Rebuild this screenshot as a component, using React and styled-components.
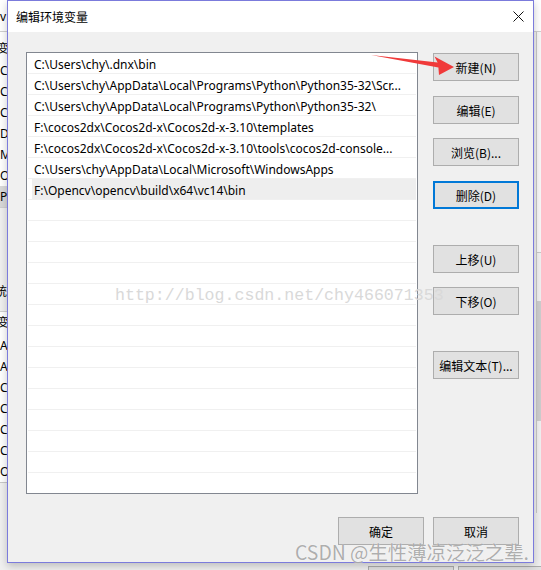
import React from "react";
import styled, { createGlobalStyle } from "styled-components";

const GlobalStyle = createGlobalStyle`
  html, body {
    margin: 0;
    padding: 0;
  }
  body {
    width: 541px;
    height: 570px;
    overflow: hidden;
    background: #f0f0f0;
    font-family: "Noto Sans CJK SC", sans-serif;
  }
`;

const paths = [
  "C:\\Users\\chy\\.dnx\\bin",
  "C:\\Users\\chy\\AppData\\Local\\Programs\\Python\\Python35-32\\Scr...",
  "C:\\Users\\chy\\AppData\\Local\\Programs\\Python\\Python35-32\\",
  "F:\\cocos2dx\\Cocos2d-x\\Cocos2d-x-3.10\\templates",
  "F:\\cocos2dx\\Cocos2d-x\\Cocos2d-x-3.10\\tools\\cocos2d-console...",
  "C:\\Users\\chy\\AppData\\Local\\Microsoft\\WindowsApps",
  "F:\\Opencv\\opencv\\build\\x64\\vc14\\bin",
];

// only a sliver of the window behind shows at the left edge
const userVars = ["CO", "CO", "CO", "DI", "M", "O", "Pa"];
const sysVars = ["Al", "Al", "Cl", "Cl", "Co", "CO", "O)"];

const buttons = [
  { label: "新建(N)", gap: 0 },
  { label: "编辑(E)", gap: 15 },
  { label: "浏览(B)...", gap: 14 },
  { label: "删除(D)", gap: 15, focused: true },
  { label: "上移(U)", gap: 36 },
  { label: "下移(O)", gap: 14 },
  { label: "编辑文本(T)...", gap: 36 },
];

const App = () => {
  const emptyRows = Array.from({ length: 15 });

  return (
    <Desktop>
      <GlobalStyle />
      <LeftPeek>
        <PeekTitle>v</PeekTitle>
        <PeekHeader>变</PeekHeader>
        {userVars.map((v, i) => (
          <PeekRow key={"u" + i} selected={i === userVars.length - 1}>
            {v}
          </PeekRow>
        ))}
        <PeekSection>统</PeekSection>
        <PeekHeader2>变</PeekHeader2>
        {sysVars.map((v, i) => (
          <PeekRow key={"s" + i}>{v}</PeekRow>
        ))}
        <PeekFooter />
      </LeftPeek>

      <Dialog>
        <TitleBar>
          <Title>编辑环境变量</Title>
          <svg width="11" height="11" viewBox="0 0 11 11">
            <path d="M0.5 0.5 L10.5 10.5 M10.5 0.5 L0.5 10.5" stroke="#111" strokeWidth="1" />
          </svg>
        </TitleBar>
        <Body>
          <Main>
            <List>
              {paths.map((p, i) => (
                <Row key={p} selected={i === paths.length - 1}>
                  {p}
                </Row>
              ))}
              {emptyRows.map((_, i) => (
                <Row key={"e" + i} />
              ))}
            </List>
            <ButtonCol>
              {buttons.map((b) => (
                <Button key={b.label} gap={b.gap} focused={b.focused}>
                  {b.label}
                </Button>
              ))}
            </ButtonCol>
          </Main>
          <Footer>
            <Button>确定</Button>
            <Button>取消</Button>
          </Footer>
        </Body>
      </Dialog>

      <RightPeek>
        <RightTop />
        <RightList />
        <RightThumbTrack>
          <RightThumb />
        </RightThumbTrack>
      </RightPeek>

      <BottomPeek>
        <GhostButton />
        <GhostButton />
      </BottomPeek>

      <Watermark>http://blog.csdn.net/chy466071353</Watermark>
      <Arrow width="90" height="26" viewBox="0 0 90 26">
        <polygon points="3,3 69.6,10.4 66.5,4.5 86,15 71,23 70.4,15.4" fill="#f03a3a" />
      </Arrow>
      <Credit>CSDN @生性薄凉泛泛之辈.</Credit>
    </Desktop>
  );
};

export default App;

const Desktop = styled.div`
  position: relative;
  width: 541px;
  height: 570px;
  overflow: hidden;
  background: #f0f0f0;
  display: grid;
  grid-template-columns: 7px 527px 7px;
  grid-template-rows: 563px 7px;
`;

const LeftPeek = styled.div`
  grid-column: 1;
  grid-row: 1 / 3;
  overflow: hidden;
  background: #f0f0f0;
  font-family: "Noto Sans", "Noto Sans CJK SC", sans-serif;
  font-size: 12px;
  color: #000;
  white-space: nowrap;
`;

const PeekTitle = styled.div`
  height: 32px;
  line-height: 34px;
  background: #fff;
  border-bottom: 1px solid #d0d0d0;
  box-sizing: border-box;
`;

const PeekHeader = styled.div`
  height: 28px;
  padding-top: 8px;
  line-height: 18px;
  margin-left: -3px;
  box-sizing: border-box;
  background: #fff;
`;

const PeekHeader2 = styled(PeekHeader)`
  height: 23px;
  padding-top: 2px;
`;

const PeekRow = styled.div`
  height: 21px;
  line-height: 21px;
  background: ${(p) => (p.selected ? "#d9d9d9" : "#fff")};
`;

const PeekSection = styled.div`
  box-sizing: border-box;
  height: 105px;
  padding-top: 75px;
  line-height: 18px;
  margin-left: -5px;
  border-top: 1px solid #d0d0d0;
  border-bottom: 1px solid #d0d0d0;
`;

const PeekFooter = styled.div`
  height: 80px;
  border-top: 1px solid #c8c8c8;
`;

const Dialog = styled.div`
  grid-column: 2;
  grid-row: 1;
  position: relative;
  z-index: 2;
  box-sizing: border-box;
  border: 1px solid #7b7bdc;
  background: #f0f0f0;
  display: flex;
  flex-direction: column;
  box-shadow: 0 3px 8px rgba(0, 0, 0, 0.22);
`;

const TitleBar = styled.div`
  flex: none;
  height: 31px;
  background: #fff;
  display: flex;
  align-items: center;
  justify-content: space-between;
  padding: 0 9px 0 8px;
`;

const Title = styled.span`
  font-size: 12px;
  color: #000;
`;

const Body = styled.div`
  padding: 20px 14px 0 18px;
`;

const Main = styled.div`
  display: flex;
  gap: 15px;
`;

const List = styled.div`
  box-sizing: border-box;
  width: 392px;
  height: 442px;
  border: 1px solid #828790;
  background: #fff;
  padding: 0 1px;
  overflow: hidden;
`;

const Row = styled.div`
  box-sizing: border-box;
  height: 21px;
  padding: 3px 0 0 6px;
  line-height: 17px;
  border-bottom: 1px solid #f0f0f0;
  font-family: "Noto Sans", sans-serif;
  font-size: 12px;
  color: #000;
  white-space: nowrap;
  overflow: hidden;
  background: ${(p) =>
    p.selected ? "linear-gradient(to right, transparent 4px, #eeeeee 4px)" : "transparent"};
`;

const ButtonCol = styled.div`
  display: flex;
  flex-direction: column;
  padding-top: 1px;
`;

const Button = styled.button`
  box-sizing: border-box;
  width: 86px;
  height: 28px;
  margin: ${(p) => p.gap || 0}px 0 0 0;
  padding: 0;
  border: ${(p) => (p.focused ? "2px solid #0078d7" : "1px solid #adadad")};
  background: #e1e1e1;
  font-family: "Noto Sans CJK SC", sans-serif;
  font-size: 12px;
  color: #000;
`;

const Footer = styled.div`
  display: flex;
  justify-content: flex-end;
  gap: 9px;
  margin-top: 23px;
`;

const RightPeek = styled.div`
  grid-column: 3;
  grid-row: 1 / 3;
  display: flex;
  flex-direction: column;
  background: #f0f0f0;
`;

const RightTop = styled.div`
  height: 32px;
  background: #fff;
  border-bottom: 1px solid #d0d0d0;
  box-sizing: border-box;
`;

const RightList = styled.div`
  height: 220px;
  border-left: 1px solid #c8c8c8;
  border-bottom: 1px solid #c8c8c8;
  margin-left: 2px;
  background: #f7f7f7;
`;

const RightThumbTrack = styled.div`
  height: 260px;
  margin-left: 2px;
  padding-top: 48px;
  border-left: 1px solid #c8c8c8;
  box-sizing: border-box;
  display: flex;
  justify-content: flex-end;
`;

const RightThumb = styled.div`
  width: 4px;
  height: 120px;
  background: #cdcdcd;
`;

const BottomPeek = styled.div`
  grid-column: 2;
  grid-row: 2;
  display: flex;
  gap: 4px;
  padding: 3px 0 0 361px;
  overflow: visible;
`;

const GhostButton = styled.div`
  flex: none;
  width: 86px;
  height: 10px;
  box-sizing: border-box;
  border: 1px solid #adadad;
  background: #e1e1e1;
`;

const Watermark = styled.div`
  position: absolute;
  z-index: 3;
  left: 115px;
  top: 286px;
  font-family: "Liberation Mono", monospace;
  font-size: 16.6px;
  color: #d9d9d9;
  white-space: nowrap;
`;

const Arrow = styled.svg`
  position: absolute;
  z-index: 3;
  left: 368px;
  top: 52px;
`;

const Credit = styled.div`
  position: absolute;
  z-index: 3;
  left: 295px;
  top: 537px;
  font-family: "Noto Sans CJK SC", sans-serif;
  font-size: 19.4px;
  color: rgba(120, 120, 120, 0.6);
  text-shadow: 0 0 1px #fff;
  white-space: nowrap;
`;
